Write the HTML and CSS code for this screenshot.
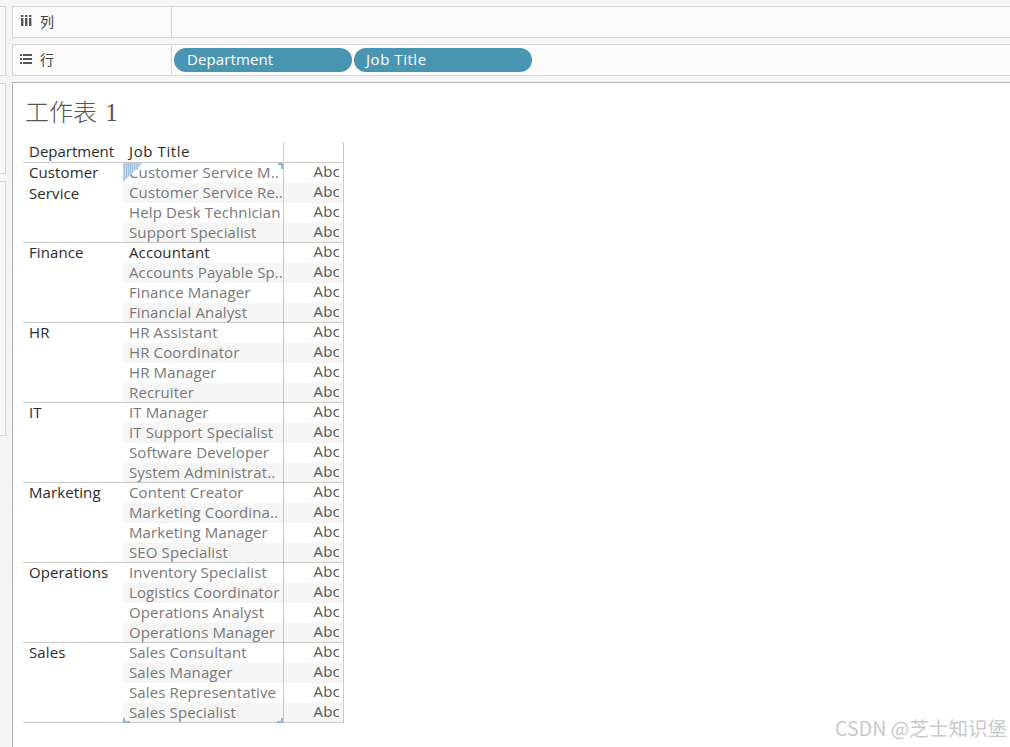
FILE: index.html
```html
<!DOCTYPE html>
<html lang="zh">
<head>
<meta charset="utf-8">
<title>工作表 1</title>
<link rel="stylesheet" href="styles.css">
</head>
<body>
<div class="app">
  <div class="side">
    <div class="side-a"></div>
    <div class="side-b"></div>
    <div class="side-c"></div>
  </div>
  <div class="main">
    <div class="shelf shelf-top">
      <div class="shelf-label">
        <svg class="ico" width="12" height="12" viewBox="0 0 12 12"><path fill="#555" d="M1 0h2.4v2H1zM1 3h2.4v8H1zM5 0h2.4v2H5zM5 3h2.4v8H5zM9 0h2.4v2H9zM9 3h2.4v8H9z"/></svg>
        <span>列</span>
      </div>
      <div class="shelf-body"></div>
    </div>
    <div class="shelf">
      <div class="shelf-label">
        <svg class="ico" width="12" height="12" viewBox="0 0 12 12"><path fill="#555" d="M0 1h2v2H0zM3 1h9v2H3zM0 5h2v2H0zM3 5h9v2H3zM0 9h2v2H0zM3 9h9v2H3z"/></svg>
        <span>行</span>
      </div>
      <div class="shelf-body pills">
        <div class="pill pill-dept">Department</div>
        <div class="pill pill-job">Job Title</div>
      </div>
    </div>
    <div class="sheet">
      <h1 class="title">工作表 <span class="title-num">1</span></h1>
      <div class="table">
        <div class="head">
          <div class="c-dept">Department</div>
          <div class="c-job">Job Title</div>
          <div class="c-abc"></div>
        </div>
        <div class="group">
          <div class="c-dept">Customer Service</div>
          <div class="rows">
            <div class="row"><div class="c-job">Customer Service M..</div><div class="c-abc">Abc</div></div>
            <div class="row"><div class="c-job">Customer Service Re..</div><div class="c-abc">Abc</div></div>
            <div class="row"><div class="c-job">Help Desk Technician</div><div class="c-abc">Abc</div></div>
            <div class="row"><div class="c-job">Support Specialist</div><div class="c-abc">Abc</div></div>
          </div>
          <svg class="mark mark-tl" width="21" height="20" viewBox="0 0 21 20"><defs><pattern id="h" width="2" height="2" patternUnits="userSpaceOnUse"><rect width="2" height="2" fill="#a0c1dd"/><rect width="1" height="2" fill="#c4d8ea"/></pattern></defs><path d="M0 0H20L0 19Z" fill="url(#h)"/></svg>
          <svg class="mark mark-tr" width="5" height="6" viewBox="0 0 5 6"><path d="M0 0H5V6H3V2H0Z" fill="#8fb5d6"/></svg>
        </div>
        <div class="group">
          <div class="c-dept">Finance</div>
          <div class="rows">
            <div class="row"><div class="c-job strong">Accountant</div><div class="c-abc">Abc</div></div>
            <div class="row"><div class="c-job">Accounts Payable Sp..</div><div class="c-abc">Abc</div></div>
            <div class="row"><div class="c-job">Finance Manager</div><div class="c-abc">Abc</div></div>
            <div class="row"><div class="c-job">Financial Analyst</div><div class="c-abc">Abc</div></div>
          </div>
        </div>
        <div class="group">
          <div class="c-dept">HR</div>
          <div class="rows">
            <div class="row"><div class="c-job">HR Assistant</div><div class="c-abc">Abc</div></div>
            <div class="row"><div class="c-job">HR Coordinator</div><div class="c-abc">Abc</div></div>
            <div class="row"><div class="c-job">HR Manager</div><div class="c-abc">Abc</div></div>
            <div class="row"><div class="c-job">Recruiter</div><div class="c-abc">Abc</div></div>
          </div>
        </div>
        <div class="group">
          <div class="c-dept">IT</div>
          <div class="rows">
            <div class="row"><div class="c-job">IT Manager</div><div class="c-abc">Abc</div></div>
            <div class="row"><div class="c-job">IT Support Specialist</div><div class="c-abc">Abc</div></div>
            <div class="row"><div class="c-job">Software Developer</div><div class="c-abc">Abc</div></div>
            <div class="row"><div class="c-job">System Administrat..</div><div class="c-abc">Abc</div></div>
          </div>
        </div>
        <div class="group">
          <div class="c-dept">Marketing</div>
          <div class="rows">
            <div class="row"><div class="c-job">Content Creator</div><div class="c-abc">Abc</div></div>
            <div class="row"><div class="c-job">Marketing Coordina..</div><div class="c-abc">Abc</div></div>
            <div class="row"><div class="c-job">Marketing Manager</div><div class="c-abc">Abc</div></div>
            <div class="row"><div class="c-job">SEO Specialist</div><div class="c-abc">Abc</div></div>
          </div>
        </div>
        <div class="group">
          <div class="c-dept">Operations</div>
          <div class="rows">
            <div class="row"><div class="c-job">Inventory Specialist</div><div class="c-abc">Abc</div></div>
            <div class="row"><div class="c-job">Logistics Coordinator</div><div class="c-abc">Abc</div></div>
            <div class="row"><div class="c-job">Operations Analyst</div><div class="c-abc">Abc</div></div>
            <div class="row"><div class="c-job">Operations Manager</div><div class="c-abc">Abc</div></div>
          </div>
        </div>
        <div class="group">
          <div class="c-dept">Sales</div>
          <div class="rows">
            <div class="row"><div class="c-job">Sales Consultant</div><div class="c-abc">Abc</div></div>
            <div class="row"><div class="c-job">Sales Manager</div><div class="c-abc">Abc</div></div>
            <div class="row"><div class="c-job">Sales Representative</div><div class="c-abc">Abc</div></div>
            <div class="row"><div class="c-job">Sales Specialist</div><div class="c-abc">Abc</div></div>
          </div>
          <svg class="mark mark-bl" width="7" height="5" viewBox="0 0 7 5"><path d="M0 0H2V3H7V5H0Z" fill="#8fb5d6"/></svg>
          <svg class="mark mark-br" width="6" height="5" viewBox="0 0 6 5"><path d="M4 0H6V5H0V3H4Z" fill="#8fb5d6"/></svg>
        </div>
      </div>
    </div>
  </div>
</div>
<div class="watermark">CSDN @芝士知识堡</div>
</body>
</html>
```
FILE: styles.css
```css
* { box-sizing: border-box; }
html, body { margin: 0; height: 100%; overflow: hidden; }
body { background: #f5f5f5; font-family: "Open Sans", "Noto Sans CJK SC", sans-serif; position: relative; }
.app { display: flex; height: 747px; padding-top: 6px; }
.side { width: 6px; flex: none; margin-right: 6px; display: flex; flex-direction: column; gap: 7px; }
.side-a, .side-b, .side-c { background: #fafafa; border: 1px solid #d4d4d4; border-left: 0; }
.side-a { height: 70px; }
.side-b { height: 91px; }
.side-c { height: 255px; }
.main { flex: 1; min-width: 0; display: flex; flex-direction: column; }
.shelf { height: 32px; display: flex; background: #fafafa; border: 1px solid #d4d4d4; border-right: 0; }
.shelf-top { margin-bottom: 6px; }
.shelf-label { width: 159px; flex: none; border-right: 1px solid #d4d4d4; display: flex; align-items: center; padding: 0 0 2px 7px; gap: 8px; font-size: 14px; color: #444; }
.ico { display: block; flex: none; }
.shelf-body { flex: 1; display: flex; align-items: center; padding-left: 2px; gap: 2px; }
.pill { height: 24px; background: #4996b2; color: #fff; border-radius: 12px; font-size: 15px; line-height: 22px; padding-left: 13px; }
.pill-dept { width: 178px; letter-spacing: .1px; }
.pill-job { width: 178px; padding-left: 12px; letter-spacing: .55px; }
.sheet { flex: 1; margin-top: 6px; background: #fff; border: 1px solid #b4b4b4; border-right: 0; border-bottom: 0; padding: 12px 0 0 10px; }
.title { margin: 0; padding-left: 2px; font-family: "Noto Sans CJK SC", sans-serif; font-weight: 300; font-size: 24px; line-height: 32px; color: #555; height: 47px; }
.title-num { margin-left: 3px; font-family: "Liberation Serif", serif; font-weight: 400; font-size: 25px; }
.table { width: 321px; font-size: 15px; color: #2b2b2b; }
.head { display: flex; height: 21px; border-bottom: 1px solid #c8c8c8; line-height: 18px; }
.head .c-dept { width: 100px; padding-left: 6px; flex: none; font-weight: 500; }
.head .c-job { width: 161px; padding-left: 6px; flex: none; font-weight: 500; letter-spacing: .6px; border-right: 1px solid #c8c8c8; }
.head .c-abc { flex: 1; border-right: 1px solid #c8c8c8; }
.group { display: flex; position: relative; border-bottom: 1px solid #c8c8c8; height: 80px; }
.group > .c-dept { width: 100px; flex: none; margin-top: -1px; padding: 0 6px; line-height: 21px; font-weight: 500; letter-spacing: .1px; }
.rows { flex: 1; min-width: 0; }
.row { display: flex; height: 20px; line-height: 18px; }
.row:last-child { height: 19px; }
.row:nth-child(even) { background: #f5f5f5; }
.row .c-job { width: 161px; flex: none; padding-left: 6px; color: #777; letter-spacing: .12px; border-right: 1px solid #c8c8c8; white-space: nowrap; overflow: hidden; }
.row .c-job.strong { color: #2b2b2b; }
.row .c-abc { flex: 1; text-align: right; padding-right: 3px; color: #555; border-right: 1px solid #c8c8c8; font-size: 15px; letter-spacing: .2px; line-height: 17px; }
.mark { position: absolute; display: block; }
.mark-tl { left: 100px; top: 0; }
.mark-tr { left: 255px; top: 0; }
.mark-bl { left: 100px; bottom: -1px; }
.mark-br { left: 254px; bottom: -1px; }
.watermark { position: absolute; left: 835px; top: 716px; font-family: "Noto Sans CJK SC", sans-serif; font-size: 19.6px; line-height: 24px; color: #c9c9c9; white-space: nowrap; }
```
